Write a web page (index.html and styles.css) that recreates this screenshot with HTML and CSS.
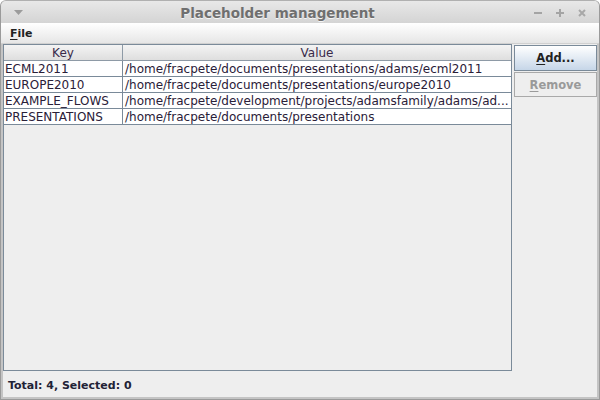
FILE: index.html
```html
<!DOCTYPE html>
<html>
<head>
<meta charset="utf-8">
<link rel="stylesheet" href="styles.css">
</head>
<body>
<div class="window">
  <div class="titlebar">
    <div class="tb-left">
      <svg width="9" height="5" viewBox="0 0 9 5"><path d="M0 0h9L4.5 5z" fill="#9c9c9c"/></svg>
    </div>
    <div class="title">Placeholder management</div>
    <div class="tb-right">
      <svg width="10" height="10" viewBox="0 0 10 10"><rect x="1" y="4" width="8" height="2" fill="#a4a4a4"/></svg>
      <svg width="10" height="10" viewBox="0 0 10 10"><rect x="1" y="4" width="8" height="2" fill="#a4a4a4"/><rect x="4" y="1" width="2" height="8" fill="#a4a4a4"/></svg>
      <svg width="10" height="10" viewBox="0 0 10 10"><path d="M2 2l6 6M8 2l-6 6" stroke="#a8a8a8" stroke-width="2"/></svg>
    </div>
  </div>
  <div class="menubar"><span class="menu"><u>F</u>ile</span></div>
  <div class="main">
    <div class="pane">
      <div class="row head">
        <div class="c1">Key</div>
        <div class="c2">Value</div>
      </div>
      <div class="row">
        <div class="c1">ECML2011</div>
        <div class="c2">/home/fracpete/documents/presentations/adams/ecml2011</div>
      </div>
      <div class="row">
        <div class="c1">EUROPE2010</div>
        <div class="c2">/home/fracpete/documents/presentations/europe2010</div>
      </div>
      <div class="row">
        <div class="c1">EXAMPLE_FLOWS</div>
        <div class="c2">/home/fracpete/development/projects/adamsfamily/adams/ad...</div>
      </div>
      <div class="row">
        <div class="c1">PRESENTATIONS</div>
        <div class="c2">/home/fracpete/documents/presentations</div>
      </div>
    </div>
    <div class="buttons">
      <div class="btn add"><u>A</u>dd...</div>
      <div class="btn remove"><u>R</u>emove</div>
    </div>
  </div>
  <div class="status">Total: 4, Selected: 0</div>
</div>
</body>
</html>
```
FILE: styles.css
```css
* { box-sizing: border-box; }
html, body { margin: 0; padding: 0; background: #ffffff; }
body { width: 600px; height: 400px; overflow: hidden; font-family: "DejaVu Sans", sans-serif; }
.window {
  width: 600px; height: 400px;
  display: flex; flex-direction: column;
  background: #eeeeee;
  border: 1px solid #9a9a9a;
  border-top-color: #b0b0b0;
  border-radius: 6px 6px 0 0;
  box-shadow: inset -2px -2px 0 #c4c4c4, inset 2px 0 0 #c4c4c4;
  overflow: hidden;
}
.titlebar {
  height: 22px; flex: none;
  display: flex; align-items: center;
  background: linear-gradient(#e8e8e8, #d4d4d4);
  padding: 1px 12px 0 13px;
}
.tb-left { width: 9px; display: flex; }
.title {
  flex: 1; text-align: center;
  font-weight: bold; font-size: 13.5px; color: #6f6f6f;
  text-shadow: 0 1px 0 #f4f4f4;
  margin-right: 3px; margin-left: 2px;
}
.tb-right { display: flex; gap: 12px; }
.menubar {
  height: 21px; flex: none;
  background: linear-gradient(#ffffff, #e6e6e6);
  border-bottom: 1px solid #d0d0d0;
  display: flex; align-items: center;
  padding-left: 9px;
}
.menu { font-weight: bold; font-size: 11px; color: #222; }
.menu u, .btn u { text-decoration-thickness: 1px; text-underline-offset: 2px; }
.main {
  flex: 1; display: flex; gap: 2px;
  padding: 0 2px 0 2px;
}
.pane {
  width: 509px; height: 327px;
  border: 1px solid #7a8a99;
  background: #eeeeee;
}
.row {
  display: flex; height: 16px;
  background: #ffffff;
  border-bottom: 1px solid #7a8a99;
  font-size: 12px; color: #2a2038; line-height: 15px;
}
.row.head {
  background: linear-gradient(#f4f4f4, #dedede);
  border-bottom: 1px solid #8e9aa6;
  color: #3a2a4a;
}
.c1, .c2 { padding-top: 1px; white-space: nowrap; overflow: hidden; }
.c1 { width: 119px; border-right: 1px solid #7a8a99; padding-left: 1px; }
.c2 { flex: 1; padding-left: 2px; }
.head .c1, .head .c2 { text-align: center; padding-left: 0; }
.head .c1 { border-right-color: #8e9aa6; }
.buttons { display: flex; flex-direction: column; gap: 1px; padding-top: 1px; }
.btn {
  width: 83px; height: 25px;
  display: flex; align-items: center; justify-content: center;
  font-weight: bold; font-size: 11.5px;
  border: 1px solid #7a8a99;
}
.add {
  background: linear-gradient(#ffffff, #c6d6e8);
  color: #222;
  height: 26px;
}
.remove {
  border-color: #a9a9a9;
  color: #9a9a9a;
  background: #eeeeee;
}
.status {
  height: 28px; flex: none;
  display: flex; align-items: center;
  padding-left: 7px; padding-top: 1px;
  font-weight: bold; font-size: 11px; color: #222236;
}
```
